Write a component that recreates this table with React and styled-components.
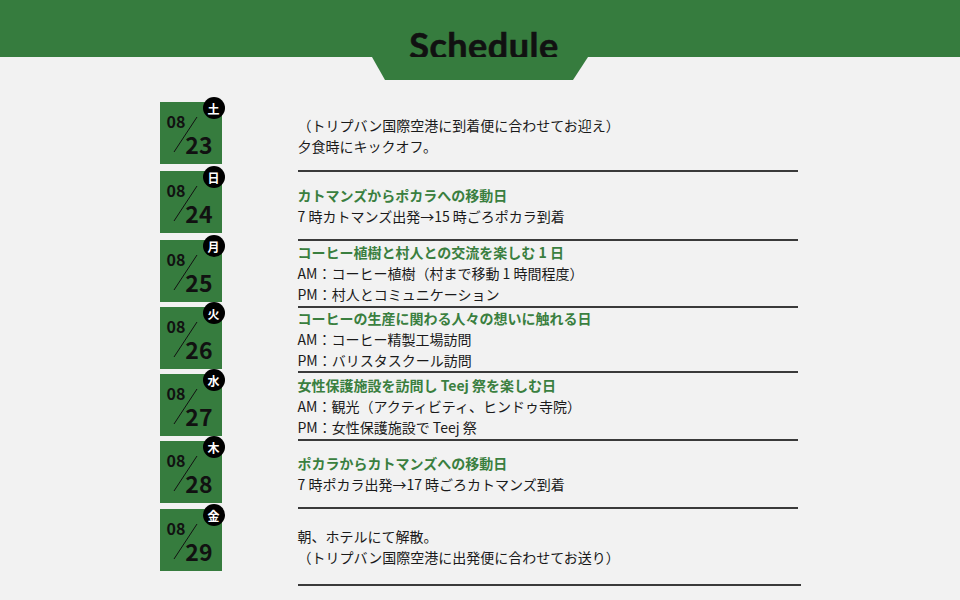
import React from 'react';
import styled, { createGlobalStyle } from 'styled-components';

const GlobalStyle = createGlobalStyle`
  body {
    margin: 0;
    background: #f2f2f2;
    font-family: "Noto Sans CJK JP", "Noto Sans", sans-serif;
  }
`;

const Page = styled.div`
  width: 960px;
  height: 600px;
  overflow: hidden;
  background: #f2f2f2;
`;

const Band = styled.header`
  height: 57px;
  background: #367c3e;
  display: flex;
  justify-content: center;
`;

const Title = styled.h1`
  margin: 0 0 0 8px;
  padding-top: 27px;
  font-family: "Lato", sans-serif;
  font-weight: 700;
  font-size: 36px;
  line-height: 36px;
  color: #111;
  letter-spacing: 0.5px;
  -webkit-text-stroke: 0.6px #111;
`;

const Tab = styled.div`
  width: 216px;
  height: 23px;
  margin: 0 auto;
  background: #367c3e;
  clip-path: polygon(0 0, 100% 0, calc(100% - 15px) 100%, 13px 100%);
`;

const List = styled.div`
  width: 641px;
  margin: 22px auto 0;
`;

const Row = styled.div`
  display: flex;
  gap: 76px;
  height: ${(p) => p.h}px;
`;

const DateBox = styled.div`
  position: relative;
  flex: none;
  width: 62px;
  height: 62px;
  margin-top: ${(p) => p.top || 0}px;
  background: #367c3e;
  box-sizing: border-box;
  padding: 11px 9px 0 7px;
  display: flex;
  flex-direction: column;
  font-family: "Noto Sans CJK JP", "Noto Sans", sans-serif;
  font-weight: 700;
  color: #111;
`;

const Month = styled.span`
  font-size: 16px;
  line-height: 16px;
`;

const Day = styled.span`
  align-self: flex-end;
  margin-top: 4px;
  font-size: 23px;
  line-height: 23px;
`;

const Slash = styled.svg`
  position: absolute;
  left: 0;
  top: 0;
`;

const Badge = styled.span`
  position: absolute;
  top: -5px;
  right: -3px;
  width: 22px;
  height: 22px;
  border-radius: 50%;
  background: #000;
  color: #fff;
  display: flex;
  align-items: center;
  justify-content: center;
  font-family: "Noto Sans CJK JP", sans-serif;
  font-size: 12px;
  font-weight: 700;
`;

const Content = styled.div`
  width: ${(p) => p.w || 500}px;
  border-bottom: 2px solid #3a3a3a;
  display: flex;
  flex-direction: column;
  justify-content: center;
  font-family: "Noto Sans CJK JP", "Noto Sans", sans-serif;
  font-size: 14px;
  line-height: 21px;
  color: #1a1a1a;
`;

const Head = styled.div`
  color: #3a7f3f;
  font-weight: 700;
`;

const Line = styled.div``;

const days = [
  { d: '23', w: '土', h: 70, lines: ['（トリプバン国際空港に到着便に合わせてお迎え）', '夕食時にキックオフ。'] },
  { d: '24', w: '日', h: 69, top: -1, head: 'カトマンズからポカラへの移動日', lines: ['7 時カトマンズ出発→15 時ごろポカラ到着'] },
  { d: '25', w: '月', h: 67, top: -1, head: 'コーヒー植樹と村人との交流を楽しむ 1 日', lines: ['AM：コーヒー植樹（村まで移動 1 時間程度）', 'PM：村人とコミュニケーション'] },
  { d: '26', w: '火', h: 65, top: -1, head: 'コーヒーの生産に関わる人々の想いに触れる日', lines: ['AM：コーヒー精製工場訪問', 'PM：バリスタスクール訪問'] },
  { d: '27', w: '水', h: 68, top: 1, head: '女性保護施設を訪問し Teej 祭を楽しむ日', lines: ['AM：観光（アクティビティ、ヒンドゥ寺院）', 'PM：女性保護施設で Teej 祭'] },
  { d: '28', w: '木', h: 68, head: 'ポカラからカトマンズへの移動日', lines: ['7 時ポカラ出発→17 時ごろカトマンズ到着'] },
  { d: '29', w: '金', h: 77, cw: 503, lines: ['朝、ホテルにて解散。', '（トリプバン国際空港に出発便に合わせてお送り）'] },
];

export default function App() {
  return (
    <Page>
      <GlobalStyle />
      <Band>
        <Title>Schedule</Title>
      </Band>
      <Tab />
      <List>
        {days.map((item) => (
          <Row key={item.d} h={item.h}>
            <DateBox top={item.top}>
              <Slash width="62" height="62">
                <line x1="14" y1="50" x2="37" y2="15" stroke="#111" strokeWidth="1" />
              </Slash>
              <Month>08</Month>
              <Day>{item.d}</Day>
              <Badge>{item.w}</Badge>
            </DateBox>
            <Content w={item.cw}>
              {item.head && <Head>{item.head}</Head>}
              {item.lines.map((l) => (
                <Line key={l}>{l}</Line>
              ))}
            </Content>
          </Row>
        ))}
      </List>
    </Page>
  );
}
